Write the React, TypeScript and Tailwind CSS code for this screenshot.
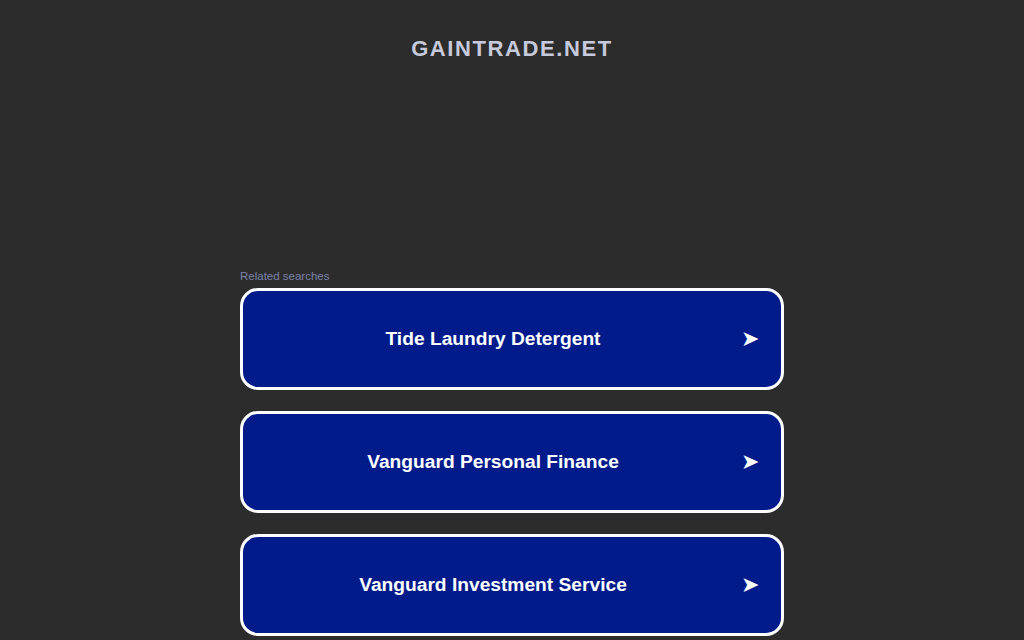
const searches = [
  "Tide Laundry Detergent",
  "Vanguard Personal Finance",
  "Vanguard Investment Service",
];

export default function App() {
  return (
    <div className="min-h-screen bg-[#2c2c2c] font-['Liberation_Sans',Arial,sans-serif]">
      <div className="pt-[36px] text-center text-[22px] font-bold leading-[26px] tracking-[1.6px] text-[#c7cadd]">
        GAINTRADE.NET
      </div>
      <div className="mx-auto mt-[207px] w-[544px]">
        <div className="mb-[4px] text-[11.5px] leading-[15px] text-[#7d82a8]">Related searches</div>
        <div className="flex flex-col gap-[21px]">
          {searches.map((s) => (
            <a
              key={s}
              href="#"
              className="flex h-[102px] items-center rounded-[18px] border-[3px] border-white bg-[#011b8b] text-white"
            >
              <span className="flex-1 pl-[2px] text-center text-[19.2px] font-bold">{s}</span>
              <span className="pr-[22px] text-[22px] leading-none">➤</span>
            </a>
          ))}
        </div>
      </div>
    </div>
  );
}
